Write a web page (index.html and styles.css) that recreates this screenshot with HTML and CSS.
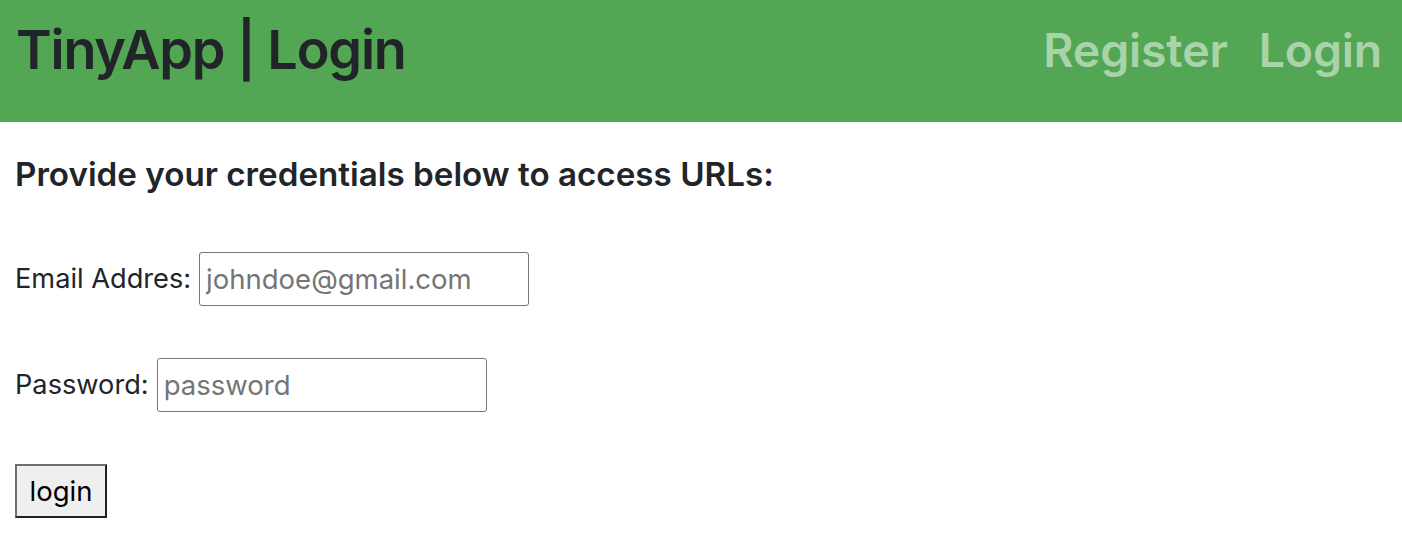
FILE: index.html
```html
<!DOCTYPE html>
<html lang="en">
<head>
<meta charset="utf-8">
<title>TinyApp | Login</title>
<link rel="stylesheet" href="styles.css">
</head>
<body>
<header class="topbar">
  <h1 class="brand">TinyApp | Login</h1>
  <nav class="nav">
    <a class="nav-link" href="#">Register</a>
    <a class="nav-link" href="#">Login</a>
  </nav>
</header>
<main class="content">
  <h4 class="lead">Provide your credentials below to access URLs:</h4>
  <form class="form">
    <div class="row">
      <label class="label" for="email">Email Addres:</label>
      <input class="field" id="email" type="text" placeholder="johndoe@gmail.com">
    </div>
    <div class="row">
      <label class="label" for="password">Password:</label>
      <input class="field" id="password" type="password" placeholder="password">
    </div>
    <div class="row">
      <button class="btn" type="submit">login</button>
    </div>
  </form>
</main>
</body>
</html>
```
FILE: styles.css
```css
* { box-sizing: border-box; }
html, body { margin: 0; padding: 0; }
body {
  font-family: Inter, "Noto Sans", "Liberation Sans", sans-serif;
  color: #212529;
  background: #fff;
  font-size: 27.2px;
}
.topbar {
  height: 122px;
  background: #53a653;
  display: flex;
  align-items: center;
  justify-content: space-between;
  padding: 0 20px 0 16px;
}
.brand {
  margin: 0;
  font-size: 54px;
  font-weight: 600;
  letter-spacing: -1.2px;
  line-height: 1;
  color: #212529;
  padding-bottom: 22px;
}
.nav {
  display: flex;
  gap: 31px;
  padding-bottom: 22px;
}
.nav-link {
  font-size: 46.5px;
  font-weight: 600;
  letter-spacing: -0.2px;
  line-height: 1;
  color: #a9d3a9;
  text-decoration: none;
}
.content {
  padding: 0 15px;
}
.lead {
  margin: 33px 0 0;
  font-size: 33.2px;
  font-weight: 600;
  line-height: 1.2;
}
.form {
  display: flex;
  flex-direction: column;
  gap: 52px;
  margin-top: 57px;
}
.row {
  display: flex;
  align-items: center;
  gap: 8px;
}
.label {
  font-size: 27.2px;
}
.field {
  width: 330px;
  height: 54px;
  border: 1px solid #767676;
  border-radius: 3px;
  padding: 0 6px;
  font-family: inherit;
  font-size: 27.5px;
  color: #212529;
}
.field::placeholder { color: #757575; }
.btn {
  height: 54px;
  width: 92px;
  padding: 0;
  background: #efefef;
  border-width: 2px;
  border-style: solid;
  border-color: #707070 #202020 #202020 #707070;
  font-family: inherit;
  font-size: 27.5px;
  color: #000;
}
```
